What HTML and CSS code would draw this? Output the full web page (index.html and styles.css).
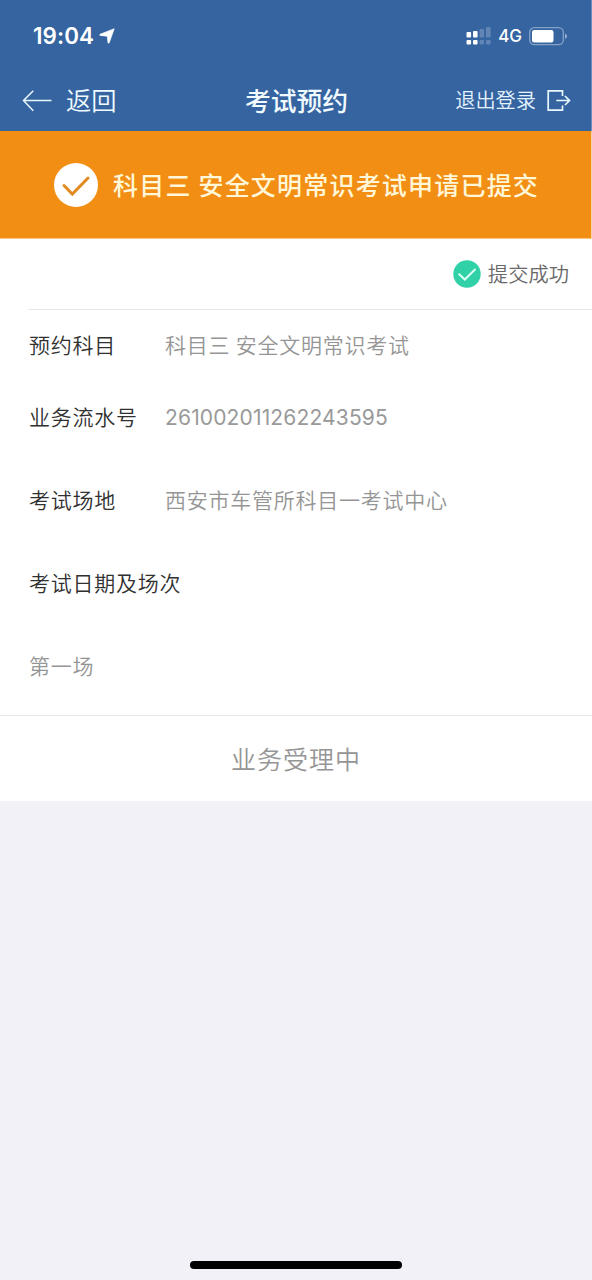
FILE: index.html
```html
<!DOCTYPE html>
<html lang="zh-CN">
<head>
<meta charset="utf-8">
<title>考试预约</title>
<link rel="stylesheet" href="styles.css">
</head>
<body>
<div class="screen">
  <header class="header">
    <div class="status">
      <div class="clock"><span class="time">19:04</span>
        <svg class="location" width="16" height="16" viewBox="0 0 16 16"><path d="M15.2.8 10.2 14.8q-.8 1-1.2-.1L8.3 8.2 1 7.4Q0 6.900 1 6.300Z" fill="#fff" stroke="#fff" stroke-width=".7" stroke-linejoin="round"/></svg>
      </div>
      <div class="indicators">
        <svg width="25" height="18" viewBox="0 0 25 18"><g fill="#fff"><rect x="0.5" y="5" width="4.6" height="5.500" rx="1"/><rect x="7" y="4" width="4.600" height="6.500" rx="1"/><rect x="0.5" y="13" width="4.600" height="4.600" rx="1"/><rect x="7" y="13" width="4.600" height="4.600" rx="1"/></g><g fill="#fff" opacity=".22"><rect x="13.5" y="2" width="4.600" height="8.500" rx="1"/><rect x="20" y="0" width="4.600" height="10.500" rx="1"/><rect x="13.5" y="13" width="4.600" height="4.600" rx="1"/><rect x="20" y="13" width="4.600" height="4.600" rx="1"/></g></svg>
        <span class="network">4G</span>
        <svg width="39" height="19" viewBox="0 0 39 19"><rect x=".7" y=".7" width="33.6" height="17" rx="4.6" fill="none" stroke="#fff" stroke-opacity=".4" stroke-width="1.3"/><rect x="3" y="3" width="21.5" height="12.5" rx="2.2" fill="#fff"/><path d="M36 6.500q2 1 2 2.800T36 12Z" fill="#fff" opacity=".5"/></svg>
      </div>
    </div>
    <nav class="nav">
      <div class="back">
        <svg width="30" height="22" viewBox="0 0 30 22"><path d="M11.3.8 1.500 10.500l9.800 10.200M1.500 10.500h28" fill="none" stroke="#e9f7ff" stroke-width="1.5"/></svg>
        <span class="label">返回</span>
      </div>
      <h1 class="title label">考试预约</h1>
      <div class="logout">
        <span class="label">退出登录</span>
        <svg width="24" height="22" viewBox="0 0 24 22"><path d="M15.500 6V.9H1.200v19.300h14.300V15.500M9.300 10.500h13M18 6l4.500 4.500L18 15" fill="none" stroke="#e9f7ff" stroke-width="1.7"/></svg>
      </div>
    </nav>
  </header>
  <section class="banner">
    <svg width="44" height="44" viewBox="0 0 44 44"><circle cx="22" cy="22" r="22" fill="#fff"/><path d="M10 22.500 18.300 31 34 15" fill="none" stroke="#e18b20" stroke-width="3" stroke-linecap="round"/></svg>
    <span class="label">科目三 安全文明常识考试申请已提交</span>
  </section>
  <main class="card">
    <div class="result">
      <svg width="28" height="28" viewBox="0 0 28 28"><circle cx="14" cy="14" r="13.7" fill="#31d1a7"/><path d="M6.200 14.300 11.800 19.500 22 9.500" fill="none" stroke="#dcfff5" stroke-width="2" stroke-linecap="round"/></svg>
      <span class="label">提交成功</span>
    </div>
    <dl class="details">
      <div class="row"><dt>预约科目</dt><dd>科目三 安全文明常识考试</dd></div>
      <div class="row row-close"><dt>业务流水号</dt><dd class="serial">261002011262243595</dd></div>
      <div class="row"><dt>考试场地</dt><dd>西安市车管所科目一考试中心</dd></div>
      <div class="row"><dt>考试日期及场次</dt></div>
      <div class="row"><dd>第一场</dd></div>
    </dl>
    <div class="progress"><span class="label">业务受理中</span></div>
  </main>
  <div class="home"></div>
</div>
</body>
</html>
```
FILE: styles.css
```css
* { box-sizing: border-box; }
body {
  margin: 0;
  font-family: "Noto Sans CJK SC", sans-serif;
  font-weight: 350;
  background: #f2f1f7;
}
svg { display: block; flex: none; }
.label { padding-bottom: 2px; }
.screen {
  width: 592px;
  height: 1280px;
  display: flex;
  flex-direction: column;
  overflow: hidden;
}
.header {
  height: 131px;
  flex: none;
  background: #3564a0;
  color: #fff;
  border-right: 1px solid #6b8dbb;
}
.status {
  height: 70px;
  display: flex;
  justify-content: space-between;
  padding: 1px 23px 0 33px;
  font-family: Inter, sans-serif;
}
.clock, .indicators { display: flex; align-items: center; }
.clock { gap: 5px; }
.indicators { padding-top: 1px; }
.time { font-size: 22.4px; font-weight: 600; letter-spacing: .1px; }
.indicators { gap: 7px; }
.network { font-size: 17px; font-weight: 500; }
.nav {
  height: 61px;
  display: grid;
  grid-template-columns: 1fr auto 1fr;
  align-items: center;
  padding: 0 20px 0 22px;
  color: #f0faff;
}
.back, .logout { display: flex; align-items: center; white-space: nowrap; }
.back { gap: 14px; font-size: 25.3px; }
.back .label { padding-bottom: 3px; }
.title { margin: 0; font-size: 25.8px; font-weight: 500; line-height: 1; }
.logout { justify-content: flex-end; gap: 11px; font-size: 20.2px; color: #e4f3ff; }
.banner {
  height: 108px;
  flex: none;
  display: flex;
  align-items: center;
  gap: 15px;
  padding-left: 54px;
  background: #f38e15;
  border-right: 1px solid #fbd29f;
  border-bottom: 1px solid #f9c785;
  color: #fff7d8;
  font-size: 25px;
  font-weight: 500;
  letter-spacing: 1.2px;
  white-space: nowrap;
}
.card { background: #fff; flex: none; }
.result {
  height: 71px;
  margin-left: 28px;
  padding-right: 23px;
  display: flex;
  align-items: center;
  justify-content: flex-end;
  gap: 7px;
  border-bottom: 1px solid #e8e8e8;
  font-size: 20.3px;
  color: #686868;
}
.details {
  height: 405px;
  margin: 0;
  padding: 19px 0 0 29px;
  display: flex;
  flex-direction: column;
  font-size: 21px;
  line-height: 30px;
  letter-spacing: .75px;
  white-space: nowrap;
}
.row { height: 30px; display: flex; }
.row + .row { margin-top: 53px; }
.row + .row-close { margin-top: 42px; }
.row dt { width: 136px; color: #303030; flex: none; }
.row dd { margin: 0; color: #959595; }
.row .serial {
  padding-top: 2px;
  font-family: Inter, sans-serif;
  font-weight: 400;
  letter-spacing: .15px;
  color: #999;
}
.progress {
  height: 86px;
  display: flex;
  align-items: center;
  justify-content: center;
  border-top: 1px solid #e8e8e8;
  font-size: 25px;
  letter-spacing: 1px;
  color: #959595;
}
.home {
  width: 212px;
  height: 8px;
  margin: auto auto 11px 190px;
  border-radius: 4px;
  background: #000;
}
```
